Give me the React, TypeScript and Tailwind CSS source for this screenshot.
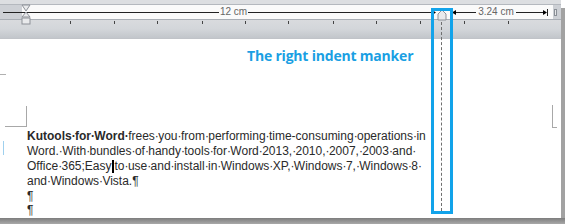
import React from "react";

function Arrow({ dir }: { dir: "l" | "r" }) {
  return (
    <svg width="4" height="5" viewBox="0 0 4 5" className="shrink-0">
      {dir === "r" ? <polygon points="0,0 4,2.5 0,5" fill="#000" /> : <polygon points="4,0 0,2.5 4,5" fill="#000" />}
    </svg>
  );
}

function T({ s }: { s: string }) {
  const parts = s.split("·");
  return (
    <>
      {parts.map((p, i) => (
        <React.Fragment key={i}>
          {p}
          {i < parts.length - 1 && <span className="tracking-[-0.66px]">·</span>}
        </React.Fragment>
      ))}
    </>
  );
}

export default function App() {
  const ticks = [70, 114, 157, 202, 245, 288, 333, 376, 420, 464, 508];
  const sans = { fontFamily: '"Liberation Sans", Arial, sans-serif' };
  return (
    <div className="relative flex flex-col w-[565px] h-[224px] bg-white overflow-hidden" style={sans}>
      <div className="flex flex-1 min-h-0">
        <div className="flex flex-col w-[561px]">
          {/* ruler */}
          <div className="h-[4px] bg-[#dcdee1]" />
          <div className="h-px bg-[#b4b8be]" />
          <div className="flex h-[15px] border-b border-[#a9aeb5]">
            <div className="w-[22px] bg-[#cdd0d5] flex items-center">
              <div className="ml-[3px] flex-1 h-px bg-[#222]" />
            </div>
            <div className="w-[531px] bg-[#fafafa] flex items-center">
              <div className="w-[197px] h-px bg-[#222]" />
              <span className="w-[29px] text-center text-[10px] leading-[12px] text-[#666]">12 cm</span>
              <div className="w-[188px] flex items-center">
                <div className="flex-1 h-px bg-[#222]" />
                <Arrow dir="r" />
              </div>
              <div className="w-[16px]" />
              <div className="w-[24px] flex items-center">
                <Arrow dir="l" />
                <div className="flex-1 h-px bg-[#222]" />
              </div>
              <span className="w-[40px] text-center text-[10px] leading-[12px] text-[#666]">3.24 cm</span>
              <div className="w-[32px] flex items-center">
                <div className="flex-1 h-px bg-[#222]" />
                <Arrow dir="r" />
                <div className="w-px h-[7px] bg-[#222]" />
              </div>
              <div className="w-[5px]" />
            </div>
            <div className="flex-1 bg-[#cdd0d5] flex items-center">
              <div className="ml-[1px] w-[3px] h-[7px] border border-[#8a8f96] bg-[#e6e7e9]" />
            </div>
          </div>
          <div className="relative h-[19px] bg-gradient-to-b from-[#d9dbde] via-[#d3d6da] to-[#c2c6cb] border-b border-[#c0c3c8]">
            <svg width="561" height="19" className="absolute left-0 top-0">
              {ticks.map((x) => (
                <line key={x} x1={x + 0.5} y1={1} x2={x + 0.5} y2={4} stroke="#444" strokeWidth={1} />
              ))}
            </svg>
          </div>
          {/* page */}
          <div className="relative flex-1 bg-white">
            <div
              className="ml-[247px] mt-[8px] text-[14px] leading-[18px] font-bold text-[#1a9fe3] tracking-[-0.2px]"
              style={{ fontFamily: '"Open Sans", sans-serif' }}
            >
              The right indent manker
            </div>
            <div className="ml-[27px] mt-[64px] text-[12px] leading-[15px] text-[#2a2a2a] whitespace-nowrap">
              <div>
                <span className="font-bold">
                  <T s="Kutools·for·Word·" />
                </span>
                <T s="frees·you·from·performing·time-consuming·operations·in" />
              </div>
              <div>
                <T s="Word.·With·bundles·of·handy·tools·for·Word·2013,·2010,·2007,·2003·and·" />
              </div>
              <div className="flex items-center">
                <span>
                  <T s="Office·365;Easy" />
                </span>
                <span className="inline-flex w-[3px] h-[15px] items-center justify-center">
                  <span className="w-[2px] h-[13px] bg-black" />
                </span>
                <span>
                  <T s="to·use·and·install·in·Windows·XP,·Windows·7,·Windows·8·" />
                </span>
              </div>
              <div>
                <T s="and·Windows·Vista.¶" />
              </div>
              <div>¶</div>
              <div className="-mt-[1px]">¶</div>
            </div>
            {/* crop marks */}
            <div className="absolute left-0 top-[35px] w-[6px] h-px bg-[#b0b0b0]" />
            <div className="absolute left-[26px] top-[67px] w-px h-[20px] bg-[#a8a8a8]" />
            <div className="absolute left-[5px] top-[87px] w-[22px] h-px bg-[#a8a8a8]" />
            <div className="absolute left-[552px] top-[66px] w-px h-[22px] bg-[#a8a8a8]" />
            <div className="absolute left-[552px] top-[88px] w-[5px] h-px bg-[#a8a8a8]" />
            <div className="absolute left-[3px] top-[102px] w-px h-[14px] bg-[#9fd0ee]" />
          </div>
        </div>
        <div className="mt-[8px] flex-1 bg-[#a2a2a2]" />
      </div>
      <div className="h-[6px] bg-gradient-to-b from-[#7d7d7d] to-[#a9a9a9]" />

      {/* left indent hourglass */}
      <svg width="10" height="21" viewBox="0 0 10 21" className="absolute left-[21px] top-[4px]">
        <polygon points="1,1 9,1 5,7" fill="#e9eaec" stroke="#8d9198" strokeWidth="1" />
        <polygon points="5,8 9,13 1,13" fill="#e9eaec" stroke="#8d9198" strokeWidth="1" />
        <rect x="1" y="14" width="8" height="6" fill="#e9eaec" stroke="#8d9198" strokeWidth="1" />
      </svg>
      {/* right indent marker */}
      <svg width="10" height="12" viewBox="0 0 10 12" className="absolute left-[437px] top-[9px]">
        <polygon points="5,1 9,5 9,11 1,11 1,5" fill="#e9eaec" stroke="#8d9198" strokeWidth="1" />
      </svg>
      {/* dashed guide */}
      <div className="absolute left-[441px] top-[22px] h-[189px] border-l border-dashed border-[#6f6f6f]" />
      {/* highlight box */}
      <div className="absolute left-[431px] top-[8px] w-[22px] h-[206px] border-[3px] border-[#12a3ea]" />
    </div>
  );
}
